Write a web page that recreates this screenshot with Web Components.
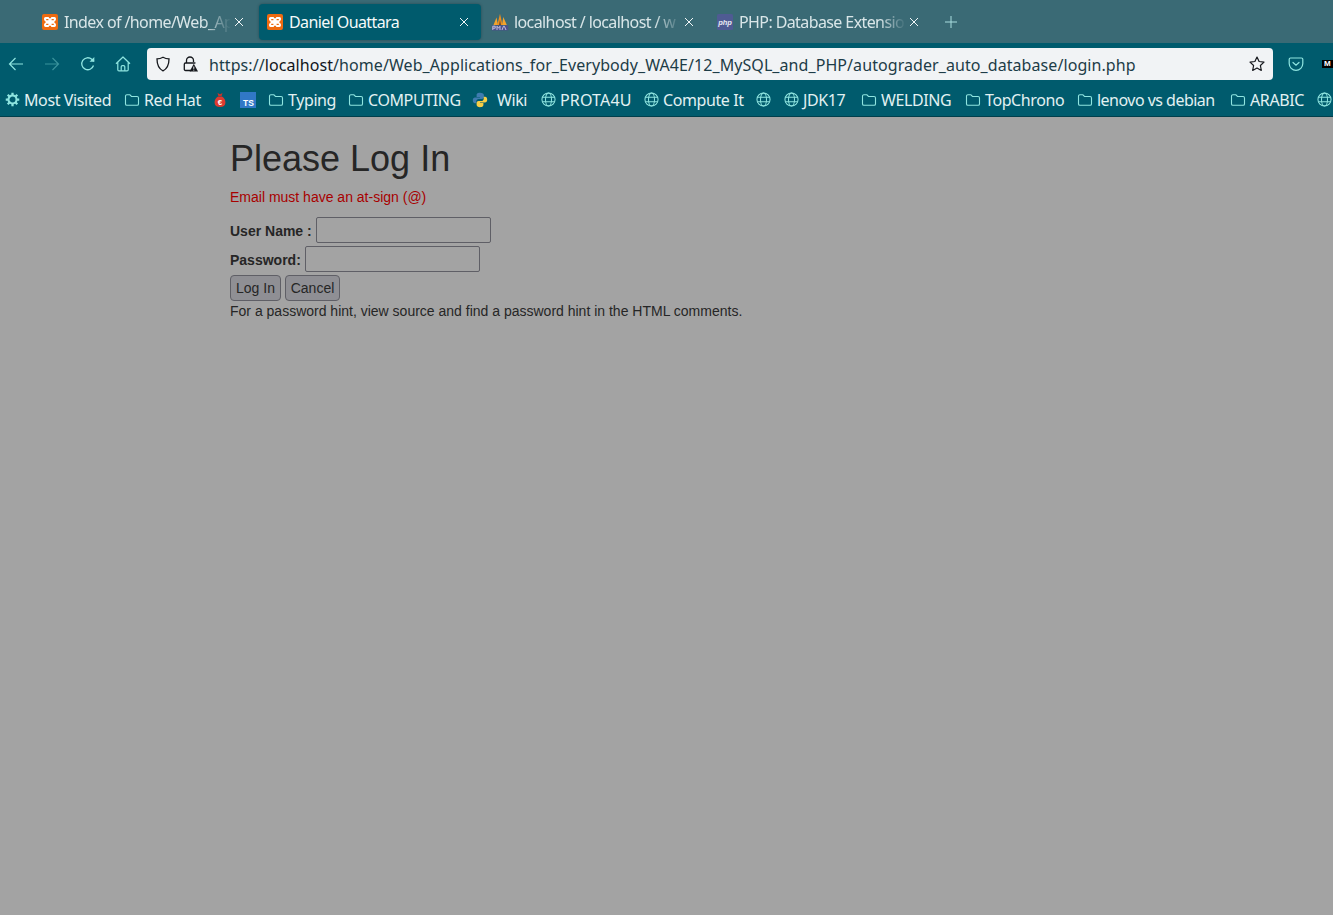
<!DOCTYPE html>
<html lang="en">
<head>
<meta charset="utf-8">
<title>Daniel Ouattara</title>
<style>
  html, body { margin: 0; height: 100%; background: #a3a3a3; overflow: hidden; }
  body { display: flex; flex-direction: column; font-family: "Noto Sans", sans-serif; }
</style>
</head>
<body>
<browser-tabs>
  <tab-item title-text="Index of /home/Web_Ap" icon="xampp"></tab-item>
  <tab-item title-text="Daniel Ouattara" icon="xampp" active></tab-item>
  <tab-item title-text="localhost / localhost / w" icon="pma"></tab-item>
  <tab-item title-text="PHP: Database Extensio" icon="php"></tab-item>
</browser-tabs>
<nav-bar url-host="localhost" url-path="/home/Web_Applications_for_Everybody_WA4E/12_MySQL_and_PHP/autograder_auto_database/login.php"></nav-bar>
<bookmark-bar>
  <bookmark-item icon="gear" label="Most Visited" style="width:107px;margin-left:5px"></bookmark-item>
  <bookmark-item icon="folder" label="Red Hat" style="width:75px;margin-left:12px"></bookmark-item>
  <bookmark-item icon="bag" style="margin-left:14px;width:14px"></bookmark-item>
  <bookmark-item icon="ts" style="margin-left:13px;width:16px"></bookmark-item>
  <bookmark-item icon="folder" label="Typing" style="width:67px;margin-left:12px"></bookmark-item>
  <bookmark-item icon="folder" label="COMPUTING" style="width:112px;margin-left:13px"></bookmark-item>
  <bookmark-item icon="python" label="Wiki" style="width:56px;margin-left:12px" wide-gap></bookmark-item>
  <bookmark-item icon="globe" label="PROTA4U" style="width:91px;margin-left:13px;--label-spacing:.15px"></bookmark-item>
  <bookmark-item icon="globe" label="Compute It" style="width:99px;margin-left:12px"></bookmark-item>
  <bookmark-item icon="globe" style="margin-left:13px;width:15px"></bookmark-item>
  <bookmark-item icon="globe" label="JDK17" style="width:62px;margin-left:13px"></bookmark-item>
  <bookmark-item icon="folder" label="WELDING" style="width:91px;margin-left:15px"></bookmark-item>
  <bookmark-item icon="folder" label="TopChrono" style="width:99px;margin-left:13px"></bookmark-item>
  <bookmark-item icon="folder" label="lenovo vs debian" style="width:137px;margin-left:13px;--label-spacing:-.52px"></bookmark-item>
  <bookmark-item icon="folder" label="ARABIC" style="width:74px;margin-left:16px"></bookmark-item>
  <bookmark-item icon="globe" style="margin-left:13px;width:15px"></bookmark-item>
</bookmark-bar>
<login-page>
  <span slot="title">Please Log In</span>
  <span slot="error">Email must have an at-sign (@)</span>
  <span slot="hint">For a password hint, view source and find a password hint in the HTML comments.</span>
</login-page>

<script>
// every icon the browser chrome uses, keyed by name
const ICONS = {
  xampp: `<svg viewBox="0 0 16 16" width="16" height="16"><rect width="16" height="16" rx="2" fill="#ee6a10"/><path fill-rule="evenodd" d="M3.6 3H6.600L7.300 4.300H8.700L9.400 3H12.400C13.400 3 14 3.800 14 5 14 6.200 13.300 7.200 12.300 7.600V8.400C13.300 8.800 14 9.800 14 11 14 12.200 13.400 13 12.400 13H9.400L8.700 11.700H7.300L6.600 13H3.600C2.600 13 2 12.200 2 11 2 9.800 2.700 8.800 3.700 8.400V7.600C2.700 7.200 2 6.200 2 5 2 3.800 2.600 3 3.600 3zM4.200 5V6.200H6.400V5zM9.600 5V6.200H11.800V5zM4.200 9.800V11H6.400V9.800zM9.600 9.800V11H11.800V9.800z" fill="#fff"/></svg>`,
  pma: `<svg viewBox="0 0 18 18" width="18" height="18"><path d="M2.500 12 5.500 4.500 7 12z" fill="#f3a32c"/><path d="M6.300 12 9 .8 11.500 12z" fill="#ef8f1d"/><path d="M11 12 12.300 4 15.800 12z" fill="#f3a32c"/><path d="M8 12 9 6.500l1 5.500z" fill="#6b4a2a"/><rect x=".8" y="12.400" width="16.400" height="5" fill="#4b4f8c"/><path d="M1.800 17v-3.800h2.400v2H1.800M6 17v-3.800l1.500 2 1.500-2V17M11 17l1.500-3.800h.8L15 17" stroke="#c9cbe6" stroke-width=".9" fill="none"/></svg>`,
  php: `<svg viewBox="0 0 16 16" width="16" height="16"><rect width="16" height="16" rx="1.500" fill="#4f5b93"/><text x="8" y="10.800" font-family="'Liberation Sans',sans-serif" font-size="7.500" font-weight="700" font-style="italic" text-anchor="middle" fill="#e8e8f2">php</text></svg>`,
  gear: `<svg viewBox="0 0 16 16" width="15" height="15"><circle cx="8" cy="8" r="4.300" fill="none" stroke="#8fe5e0" stroke-width="2.200"/><path d="M8 .8v3M8 12.200v3M.8 8h3M12.200 8h3M2.900 2.900 5 5M11 11l2.100 2.100M13.100 2.900 11 5M5 11l-2.100 2.100" stroke="#8fe5e0" stroke-width="2.400"/></svg>`,
  folder: `<svg viewBox="0 0 16 16" width="16" height="16"><path d="M1.500 4.200c0-.8.6-1.400 1.400-1.400h3l1.600 1.700h5.600c.8 0 1.400.6 1.400 1.400v6c0 .8-.6 1.300-1.400 1.300H2.900c-.8 0-1.400-.5-1.400-1.300z" fill="none" stroke="#8fe5e0" stroke-width="1.100"/></svg>`,
  globe: `<svg viewBox="0 0 16 16" width="15" height="15" fill="none" stroke="#8fe5e0" stroke-width="1.100"><circle cx="8" cy="8" r="7"/><ellipse cx="8" cy="8" rx="3.200" ry="7"/><path d="M1.400 5.600h13.200M1.400 10.400h13.200"/></svg>`,
  bag: `<svg viewBox="0 0 14 16" width="14" height="16"><path d="M4.500 1 7 2.200 9.500 1 8.600 4H5.400z" fill="#c9332a"/><path d="M5 4.600h4c2.400 1.600 3.600 3.900 3.400 6.400-.2 2.800-2 4-5.400 4s-5.200-1.200-5.400-4C1.400 8.500 2.600 6.200 5 4.600z" fill="#dd3b30"/><text x="7" y="13" font-family="'Liberation Sans',sans-serif" font-size="8" font-weight="700" text-anchor="middle" fill="#fff">€</text></svg>`,
  ts: `<svg viewBox="0 0 16 16" width="16" height="16"><rect width="16" height="16" fill="#3178c6"/><text x="8.500" y="14" font-family="'Liberation Sans',sans-serif" font-size="8.500" font-weight="700" text-anchor="middle" fill="#fff">TS</text></svg>`,
  python: `<svg viewBox="0 0 16 16" width="16" height="16"><path d="M8 .8c-3 0-3.400 1.300-3.400 2.400v1.700H8v.6H3C1.600 5.500.8 6.700.8 8.300c0 1.700.8 2.900 2.100 2.900h1.400V9.300c0-1.300 1.100-2.400 2.400-2.400h3.300c1 0 1.900-.9 1.900-1.900V3.200C11.900 1.700 10.500.8 8 .8z" fill="#3f7cb0"/><path d="M8 15.200c3 0 3.400-1.300 3.400-2.400v-1.700H8v-.6h5c1.400 0 2.200-1.200 2.200-2.800 0-1.700-.8-2.900-2.100-2.900h-1.400v1.900c0 1.300-1.100 2.400-2.400 2.400H6.500c-1 0-1.900.9-1.900 1.900v1.800c0 1.500 1.400 2.400 3.400 2.400z" fill="#f7cf46"/></svg>`,
  back: `<svg viewBox="0 0 16 16" width="16" height="16" fill="none" stroke="currentColor" stroke-width="1.200"><path d="M15 8H1.500M7.500 2 1.500 8l6 6"/></svg>`,
  forward: `<svg viewBox="0 0 16 16" width="16" height="16" fill="none" stroke="currentColor" stroke-width="1.200"><path d="M1 8h13.500M8.500 2l6 6-6 6"/></svg>`,
  reload: `<svg viewBox="0 0 16 16" width="16" height="16" fill="none" stroke="currentColor" stroke-width="1.300"><path d="M13.500 9.500A6 6 0 1 1 11.800 3.300L14 5.400"/><path d="M14.300 1v4.800H9.500" fill="currentColor" stroke="none"/></svg>`,
  home: `<svg viewBox="0 0 16 16" width="16" height="16" fill="none" stroke="currentColor" stroke-width="1.200" stroke-linejoin="round"><path d="M1 7.800 8 1l7 6.800M2.800 6.500v7.200c0 .7.500 1.200 1.200 1.200h8c.7 0 1.200-.5 1.200-1.200V6.500"/><path d="M6.200 14.800v-4c0-.7.500-1.200 1.200-1.200h1.200c.7 0 1.200.5 1.200 1.200v4"/></svg>`,
  shield: `<svg viewBox="0 0 16 16" width="16" height="16" fill="none" stroke="#16181d" stroke-width="1.300"><path d="M8 1.200c2 1.100 3.900 1.600 6 1.700 0 5.600-1.600 9.600-6 11.900C3.600 12.500 2 8.500 2 2.900c2.100-.1 4-.6 6-1.700z"/></svg>`,
  lock: `<svg viewBox="0 0 16 16" width="16" height="16"><path d="M4.500 7V4.500a3.500 3.500 0 0 1 7 0V6" fill="none" stroke="#16181d" stroke-width="1.300"/><path d="M9 14.500H3.500c-.8 0-1.200-.5-1.200-1.200V8.200C2.300 7.500 2.700 7 3.500 7h9c.4 0 .7.100.9.400" fill="none" stroke="#16181d" stroke-width="1.300"/><path d="M11.800 7.800 16 15.500H7.600z" fill="#16181d"/><path d="M11.800 10.500v2.400M11.800 13.600v1" stroke="#fff" stroke-width=".9"/></svg>`,
  star: `<svg viewBox="0 0 16 16" width="16" height="16" fill="none" stroke="#16181d" stroke-width="1.200" stroke-linejoin="round"><path d="m8 1 2.100 4.500 4.900.6-3.600 3.400.9 4.900L8 12l-4.300 2.400.9-4.900L1 6.100l4.900-.6z"/></svg>`,
  pocket: `<svg viewBox="0 0 16 16" width="16" height="16" fill="none" stroke="currentColor" stroke-width="1.200"><path d="M2.500 2h11c.8 0 1.300.5 1.300 1.300v4.200a6.800 6.800 0 0 1-13.600 0V3.300C1.200 2.500 1.700 2 2.500 2z"/><path d="m5 6.500 3 2.800 3-2.800" stroke-linecap="round"/></svg>`,
  close: `<svg viewBox="0 0 10 10" width="10" height="10" fill="none" stroke="currentColor" stroke-width="1"><path d="m1 1 8 8M9 1l-8 8"/></svg>`,
  plus: `<svg viewBox="0 0 14 14" width="14" height="14" fill="none" stroke="currentColor" stroke-width="1"><path d="M7 1v12M1 7h12"/></svg>`
};

class BrowserTabs extends HTMLElement {
  constructor() {
    super();
    this.attachShadow({ mode: "open" });
    this.shadowRoot.innerHTML = `<style>
      :host { display: flex; align-items: center; height: 43px; padding-left: 34px; background: #3a6a75; box-sizing: border-box; flex: none; }
      .new { width: 14px; height: 14px; margin-left: 10px; color: #a9dde0; display: flex; }
    </style><slot></slot><span class="new">${ICONS.plus}</span>`;
  }
}

class TabItem extends HTMLElement {
  constructor() {
    super();
    this.attachShadow({ mode: "open" });
    const title = this.getAttribute("title-text");
    this.shadowRoot.innerHTML = `<style>
      :host { display: flex; align-items: center; width: 225px; height: 36px; box-sizing: border-box; padding-left: 8px; flex: none; border-radius: 4px; color: #d9e6e8; }
      :host([active]) { background: #005b6d; color: #f4fafa; box-shadow: 0 0 3px rgba(0,0,0,.3); width: 222px; margin-right: 3px; }
      .ico { width: 16px; height: 16px; display: flex; align-items: center; justify-content: center; flex: none; }
      .ico svg { flex: none; }
      .t { margin-left: 6px; width: 167px; font-size: 16px; letter-spacing: -.6px; line-height: 20px; white-space: nowrap;
           -webkit-mask-image: linear-gradient(to right, #000 84%, transparent 100%); }
      :host([active]) .t { -webkit-mask-image: none; }
      .x { margin-left: 3px; width: 10px; height: 10px; display: flex; color: #f2f7f8; }
    </style>
    <span class="ico">${ICONS[this.getAttribute("icon")]}</span>
    <span class="t">${title}</span>
    <span class="x">${ICONS.close}</span>`;
  }
}

class NavBar extends HTMLElement {
  constructor() {
    super();
    this.attachShadow({ mode: "open" });
    const host = this.getAttribute("url-host");
    const path = this.getAttribute("url-path");
    this.shadowRoot.innerHTML = `<style>
      :host { display: flex; align-items: center; height: 42px; background: #005b6d; flex: none; color: #8fe5e0; }
      .btn { display: flex; width: 16px; height: 16px; flex: none; }
      .btn.off { opacity: .4; }
      .url { display: flex; align-items: center; width: 1126px; height: 32px; margin-left: 16px; background: #f1f3f5; border-radius: 4px; flex: none; box-sizing: border-box; padding-left: 8px; }
      .u { font-size: 16px; line-height: 22px; color: #1d3c47; white-space: nowrap; margin-left: 11px; padding-top: 2px; flex: 1; letter-spacing: .075px; }
      .u b { font-weight: 400; color: #10151c; }
      .star { margin-right: 8px; }
      .mini { width: 12px; height: 8px; background: #000; color: #fff; font: 700 8px/8px "Liberation Sans", sans-serif; text-align: left; padding-left: 2px; margin-left: 18px; overflow: hidden; flex: none; }
    </style>
    <span class="btn" style="margin-left:8px">${ICONS.back}</span>
    <span class="btn off" style="margin-left:20px">${ICONS.forward}</span>
    <span class="btn" style="margin-left:20px">${ICONS.reload}</span>
    <span class="btn" style="margin-left:19px">${ICONS.home}</span>
    <div class="url">
      <span class="btn">${ICONS.shield}</span>
      <span class="btn" style="margin-left:11px">${ICONS.lock}</span>
      <span class="u">https://<b>${host}</b>${path}</span>
      <span class="btn star">${ICONS.star}</span>
    </div>
    <span class="btn" style="margin-left:15px">${ICONS.pocket}</span>
    <span class="mini">M</span>`;
  }
}

class BookmarkBar extends HTMLElement {
  constructor() {
    super();
    this.attachShadow({ mode: "open" });
    this.shadowRoot.innerHTML = `<style>
      :host { display: flex; align-items: center; height: 32px; padding-bottom: 2px; background: #005b6d; border-bottom: 1px solid #003f4c; box-sizing: border-box; flex: none; overflow: hidden; }
    </style><slot></slot>`;
  }
}

class BookmarkItem extends HTMLElement {
  constructor() {
    super();
    this.attachShadow({ mode: "open" });
    const label = this.getAttribute("label");
    this.shadowRoot.innerHTML = `<style>
      :host { display: flex; align-items: center; flex: none; color: #e2f1f2; }
      .ico { display: flex; flex: none; }
      .l { margin-left: 4px; font-size: 16px; letter-spacing: var(--label-spacing, -.4px); line-height: 20px; white-space: nowrap; }
      :host([wide-gap]) .l { margin-left: 9px; }
    </style>
    <span class="ico">${ICONS[this.getAttribute("icon")]}</span>
    ${label ? `<span class="l">${label}</span>` : ""}`;
  }
}

class LoginPage extends HTMLElement {
  constructor() {
    super();
    this.attachShadow({ mode: "open" });
    this.shadowRoot.innerHTML = `<style>
      :host { display: block; flex: 1; padding: 22px 0 0 230px; background: #a3a3a3; color: #262626; font: 14px/20px "Liberation Sans", Arial, sans-serif; }
      h1 { margin: 0; font-size: 36px; line-height: 40px; font-weight: 400; color: #262626; }
      .err { margin: 8px 0 0; color: #a80000; }
      .row { display: flex; align-items: center; margin-top: 3px; height: 26px; }
      .row.first { margin-top: 10px; }
      label { font-weight: 700; margin-right: 4px; position: relative; top: 1px; }
      input { width: 175px; height: 26px; box-sizing: border-box; margin: 0; background: #a3a3a3; border: 1px solid #5f5f66; border-radius: 2px; padding: 0 4px; }
      .btns { display: flex; gap: 4px; margin-top: 3px; }
      button { height: 26px; box-sizing: border-box; padding: 0; margin: 0; background: #8f8f94; border: 1px solid #5f5f66; border-radius: 4px; color: #262626; font: inherit; width: 51px; }
      button + button { width: 55px; }
      .hint { margin: 0; line-height: 20px; }
    </style>
    <h1><slot name="title"></slot></h1>
    <p class="err"><slot name="error"></slot></p>
    <div class="row first"><label for="u">User Name :</label><input id="u"></div>
    <div class="row"><label for="p">Password:</label><input id="p" type="password"></div>
    <div class="btns"><button>Log In</button><button>Cancel</button></div>
    <p class="hint"><slot name="hint"></slot></p>`;
  }
}

customElements.define("browser-tabs", BrowserTabs);
customElements.define("tab-item", TabItem);
customElements.define("nav-bar", NavBar);
customElements.define("bookmark-bar", BookmarkBar);
customElements.define("bookmark-item", BookmarkItem);
customElements.define("login-page", LoginPage);
</script>
</body>
</html>
